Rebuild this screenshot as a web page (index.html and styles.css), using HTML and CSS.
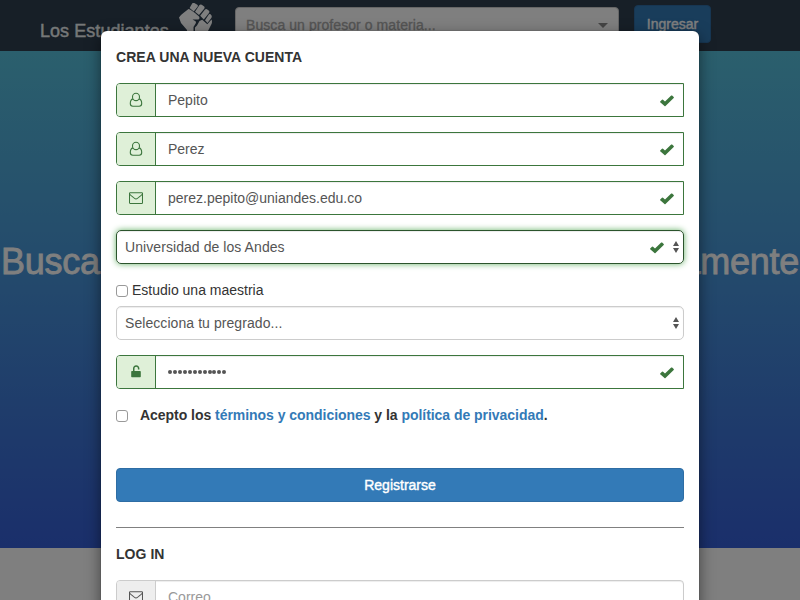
FILE: index.html
```html
<!DOCTYPE html>
<html lang="es">
<head>
<meta charset="utf-8">
<title>Los Estudiantes</title>
<link rel="stylesheet" href="styles.css">
</head>
<body>
<svg class="defs" width="0" height="0">
  <symbol id="user" viewBox="0 0 14 16"><g fill="none" stroke="currentColor" stroke-width="1.1"><ellipse cx="7" cy="4.900" rx="3.500" ry="3.700"/><path d="M4 6.900C2 7.400 1.300 9.300 1.300 11.600c0 1.600 1 2.700 2.500 2.700h6.400c1.500 0 2.500-1.100 2.500-2.700 0-2.300-.7-4.200-2.700-4.700"/></g></symbol>
  <symbol id="mail" viewBox="0 0 14 12"><g fill="none" stroke="currentColor" stroke-width="1.05"><rect x=".5" y=".7" width="13" height="10.7" rx=".7"/><path d="M.7 2.200C1.400 3.300 3.900 5 5.500 6.400c1.100.9 1.900.9 3 0 1.600-1.400 4.100-3.100 4.800-4.200"/></g></symbol>
  <symbol id="check" viewBox="0 0 14 12"><path fill="currentColor" d="M.2 6.500 2 4.700q.5-.4 1 0l2 1.800L11.200.6q.5-.4.900 0l1.600 1.500q.4.400 0 .8L5.500 11q-.5.500-1 0L.2 7.200q-.3-.3 0-.7Z"/></symbol>
  <symbol id="lock" viewBox="0 0 10 13"><path fill="currentColor" d="M.9 6H2V3.600C2 1.600 3.300.3 5.200.3S8.400 1.600 8.400 3.600v1H6.900v-1c0-1.100-.6-1.800-1.700-1.800s-1.700.7-1.700 1.800V6h5.600q.7 0 .7.700v4.900q0 .7-.7.700H.9q-.7 0-.7-.7V6.700Q.2 6 .9 6Z"/></symbol>
  <symbol id="updown" viewBox="0 0 6 12"><path fill="currentColor" d="M3 0 6 5H0ZM0 7h6L3 12Z"/></symbol>
</svg>
<div class="page">
  <header class="nav">
    <span class="brand">Los Estudiantes</span>
    <svg class="fist" viewBox="0 0 34 38"><path fill="#fff" d="M0 14.500Q1.500 12 5 9.500L9.500 6Q11 6 12.500 7.500L16 10l4 3.500q1.200 2-.5 3H13.500l3 1.700q1 1.300-.2 2.800L14.500 24v14H8V27L2 20ZM10.600 5 13 .8Q14-.6 15.300 0L18.300 1.700Q19.300 2.600 18.600 3.800L14.800 8.500ZM16 8.800 20.300 2.300Q21.300 1 22.700 1.800L25.200 3.500Q26 4.500 25.200 5.700L20 12ZM21.200 12.800 26 6.600Q27 5.600 28.300 6.400L30 7.800Q30.800 8.800 30 10L24.800 16.500ZM26 17.300 30 11.300Q31.300 10.500 32.200 12 33.300 13.500 32.300 15L28.500 20ZM20.500 18 23.200 16.700 28.300 21.300 32.500 16.500Q33.500 18.500 32.500 21L24 38H16V24.500L18 22.500Z"/></svg>
    <div class="search"><span>Busca un profesor o materia...</span><i class="caret"></i></div>
    <span class="enter">Ingresar</span>
  </header>
  <section class="hero"><h1><span>Busca</span><span>anónimamente</span></h1></section>
</div>
<div class="backdrop">
  <main class="modal">
    <h4>CREA UNA NUEVA CUENTA</h4>
    <div class="group ok"><span class="addon"><svg class="i-user"><use href="#user"/></svg></span><span class="value">Pepito</span><svg class="i-check"><use href="#check"/></svg></div>
    <div class="group ok"><span class="addon"><svg class="i-user"><use href="#user"/></svg></span><span class="value">Perez</span><svg class="i-check"><use href="#check"/></svg></div>
    <div class="group ok"><span class="addon"><svg class="i-mail"><use href="#mail"/></svg></span><span class="value email">perez.pepito@uniandes.edu.co</span><svg class="i-check"><use href="#check"/></svg></div>
    <div class="select focus"><span class="value uni">Universidad de los Andes</span><svg class="i-check"><use href="#check"/></svg><svg class="i-updown"><use href="#updown"/></svg></div>
    <label class="master"><i class="box"></i><span>Estudio una maestria</span></label>
    <div class="select"><span class="value uni">Selecciona tu pregrado...</span><svg class="i-updown"><use href="#updown"/></svg></div>
    <div class="group ok"><span class="addon"><svg class="i-lock"><use href="#lock"/></svg></span><span class="value dots"><i></i><i></i><i></i><i></i><i></i><i></i><i></i><i></i><i></i><i></i><i></i><i></i></span><svg class="i-check"><use href="#check"/></svg></div>
    <label class="terms"><i class="box"></i><span>Acepto los <a>términos y condiciones</a> y la <a>política de privacidad</a>.</span></label>
    <div class="submit"><span>Registrarse</span></div>
    <hr>
    <h4 class="login">LOG IN</h4>
    <div class="group"><span class="addon"><svg class="i-mail"><use href="#mail"/></svg></span><span class="value hint">Correo</span></div>
  </main>
</div>
</body>
</html>
```
FILE: styles.css
```css
* { box-sizing: border-box; }
html, body { height: 100%; overflow: hidden; }
body {
  margin: 0;
  font: 14px/20px "Liberation Sans", Arial, sans-serif;
  color: #333;
  background: #fff;
}
.defs { position: absolute; }
svg { display: block; flex: none; }
.page { height: 600px; }
.nav {
  height: 51px;
  padding-left: 40px;
  display: flex;
  align-items: flex-start;
  background: #2e3e4f;
}
.brand {
  width: 138px;
  padding-top: 21px;
  font-size: 18px;
  white-space: nowrap;
  color: #ecf0f1;
  letter-spacing: .05px;
  -webkit-text-stroke: .4px #ecf0f1;
}
.fist { width: 34px; height: 38px; margin: 3px 0 0 1px; }
.search {
  width: 384px;
  height: 36px;
  margin: 7px 0 0 22px;
  padding: 0 10px;
  display: flex;
  align-items: center;
  justify-content: space-between;
  border: 1px solid #ccc;
  border-radius: 4px;
  background: #fff;
  color: #aaa;
  -webkit-text-stroke: .3px #aaa;
}
.search span { letter-spacing: .07px; }
.caret {
  border: 5px solid transparent;
  border-top-color: #888;
  border-bottom: 0;
}
.enter {
  width: 77px;
  height: 38px;
  margin: 5px 0 0 15px;
  padding-top: 8px;
  text-align: center;
  border-radius: 4px;
  border: 1px solid #2e6da4;
  background: #337ab7;
  color: #fff;
  -webkit-text-stroke: .4px #fff;
}
.hero {
  height: 497px;
  padding: 191px 1px 0;
  background: linear-gradient(#56bfda, #355ed6);
}
.hero h1 {
  margin: 0;
  display: flex;
  justify-content: space-between;
  font-size: 36px;
  line-height: 40px;
  font-weight: 400;
  letter-spacing: -.25px;
  color: #fff;
  -webkit-text-stroke: .8px #fff;
}
.backdrop {
  position: absolute;
  inset: 0;
  padding-top: 31px;
  overflow: hidden;
  background: rgba(0, 0, 0, .5);
}
.modal {
  width: 598px;
  height: 700px;
  margin: 0 auto;
  padding: 16px 15px;
  border-radius: 6px;
  background: #fff;
  box-shadow: 0 5px 15px rgba(0, 0, 0, .5), 0 0 1px rgba(0, 0, 0, .5);
}
h4 { margin: 0 0 16px; font-size: 14px; line-height: 20px; font-weight: 700; letter-spacing: .04px; }
.group, .select {
  height: 34px;
  margin-bottom: 15px;
  display: flex;
  align-items: center;
  border: 1px solid #ccc;
  border-radius: 4px 0 0 4px;
  color: #555;
  box-shadow: inset 0 1px 1px rgba(0, 0, 0, .075);
}
.ok { border-color: #3c763d; }
.addon {
  width: 39px;
  height: 32px;
  display: flex;
  align-items: center;
  justify-content: center;
  border-right: 1px solid #ccc;
  border-radius: 3px 0 0 3px;
  background: #eee;
}
.ok .addon { color: #3c763d; border-color: #3c763d; background: #dff0d8; }
.value { flex: 1; padding-left: 12px; }
.group .i-check { margin-right: 9px; }
.i-check { width: 14px; height: 12px; margin-top: 2px; color: #3c763d; }
.i-user { width: 14px; height: 16px; }
.i-mail { width: 14px; height: 12px; }
.i-lock { width: 10px; height: 13px; margin-top: -2px; }
.select { border-radius: 5px; }
.select .value { padding-left: 8px; }
.select .i-check { margin-right: 9px; }
.uni { letter-spacing: .07px; }
.i-updown { width: 6px; height: 12px; margin-right: 4px; }
.focus {
  border-color: #2b542c;
  box-shadow: inset 0 1px 1px rgba(0, 0, 0, .075), 0 0 6px #67b168;
}
.box {
  width: 12px;
  height: 12px;
  flex: none;
  border: 1px solid #999;
  border-radius: 3px;
  background: #fff;
}
.master { height: 27px; display: flex; align-items: flex-start; gap: 4px; padding-top: 1px; }
.master .box, .terms .box { margin-top: 5px; }
.dots { display: flex; gap: .95px; padding-left: 12px; }
.dots i { width: 4px; height: 4px; border-radius: 50%; background: #555; }
.terms { height: 63px; margin-top: 16px; display: flex; gap: 12px; font-weight: 700; letter-spacing: -.04px; }
.terms a { color: #337ab7; }
.submit {
  height: 34px;
  display: flex;
  align-items: center;
  justify-content: center;
  border: 1px solid #2e6da4;
  border-radius: 4px;
  background: #337ab7;
  color: #fff;
  -webkit-text-stroke: .4px #fff;
}
hr { margin: 25px 0 16px; border: 0; border-top: 1px solid #808080; }
.login + .group { border-radius: 4px; }
.hint { color: #999; }
```
